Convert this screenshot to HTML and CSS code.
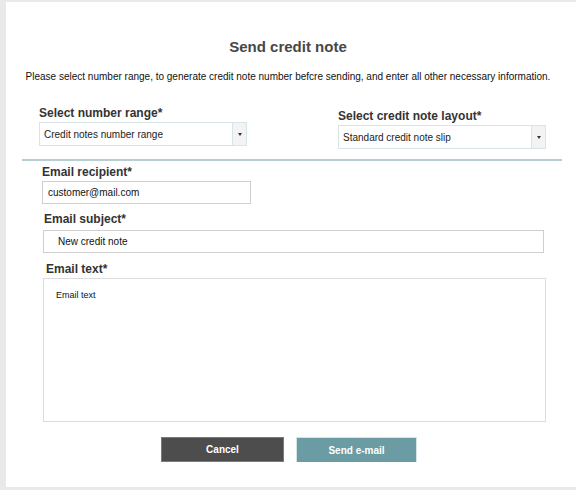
FILE: index.html
```html
<!DOCTYPE html>
<html>
<head>
<meta charset="utf-8">
<link rel="stylesheet" href="styles.css">
</head>
<body>
<div class="panel">
  <h1 class="title">Send credit note</h1>
  <p class="desc">Please select number range, to generate credit note number befcre sending, and enter all other necessary information.</p>
  <div class="selects">
    <div class="col col-left">
      <div class="label">Select number range*</div>
      <div class="select"><span class="sel-text">Credit notes number range</span><span class="arrow"><span class="tri"></span></span></div>
    </div>
    <div class="col col-right">
      <div class="label">Select credit note layout*</div>
      <div class="select"><span class="sel-text">Standard credit note slip</span><span class="arrow"><span class="tri"></span></span></div>
    </div>
  </div>
  <div class="divider"></div>
  <div class="field f-recipient">
    <div class="label">Email recipient*</div>
    <div class="input in-recipient">customer@mail.com</div>
  </div>
  <div class="field f-subject">
    <div class="label">Email subject*</div>
    <div class="input in-subject">New credit note</div>
  </div>
  <div class="field f-text">
    <div class="label">Email text*</div>
    <div class="textarea">Email text</div>
  </div>
  <div class="buttons">
    <div class="btn btn-cancel">Cancel</div>
    <div class="btn btn-send">Send e-mail</div>
  </div>
</div>
</body>
</html>
```
FILE: styles.css
```css
html, body {
  margin: 0;
  padding: 0;
  background: #e9e9e9;
  font-family: "Liberation Sans", Arial, sans-serif;
}
.panel {
  margin: 2px 0 0 6px;
  height: 485px;
  background: #fff;
  padding-top: 36px;
  box-sizing: border-box;
}
.title {
  margin: 0;
  text-align: center;
  font-size: 15px;
  line-height: 18px;
  font-weight: bold;
  color: #474747;
  padding-right: 6px;
}
.desc {
  margin: 15px 0 0 0;
  text-align: center;
  font-size: 10px;
  line-height: 12px;
  color: #111;
  padding-right: 6px;
}
.selects {
  display: flex;
  margin-top: 23px;
  padding-left: 33px;
}
.col {
  width: 208px;
  display: flex;
  flex-direction: column;
}
.col-right {
  margin-left: 91px;
  padding-top: 3px;
}
.label {
  font-size: 12px;
  line-height: 14px;
  font-weight: bold;
  color: #333;
}
.select {
  margin-top: 2px;
  height: 24px;
  border: 1px solid #d7e5e8;
  box-sizing: border-box;
  display: flex;
  align-items: center;
  font-size: 10px;
  color: #222;
}
.sel-text {
  flex: 1;
  padding-left: 4px;
}
.arrow {
  width: 13px;
  align-self: stretch;
  background: #f3f3f3;
  border-left: 1px solid #d7e5e8;
  display: flex;
  align-items: center;
  justify-content: center;
}
.tri {
  width: 0;
  height: 0;
  border-left: 2px solid transparent;
  border-right: 2px solid transparent;
  border-top: 3px solid #333;
}
.divider {
  margin: 10px 14px 0 16px;
  height: 2px;
  background: #b7ced3;
}
.field {
  display: flex;
  flex-direction: column;
}
.f-recipient {
  margin-top: 4px;
  padding-left: 36px;
}
.f-subject {
  margin-top: 8px;
  padding-left: 37px;
  margin-right: 32px;
}
.f-subject .label { padding-left: 1px; }
.f-text {
  margin-top: 9px;
  padding-left: 37px;
  margin-right: 30px;
}
.f-text .label { padding-left: 3px; }
.input {
  margin-top: 2px;
  height: 23px;
  border: 1px solid #cfcfcf;
  box-sizing: border-box;
  font-size: 10px;
  color: #111;
  display: flex;
  align-items: center;
}
.in-recipient {
  width: 209px;
  padding-left: 5px;
}
.in-subject {
  margin-top: 4px;
  padding-left: 14px;
}
.textarea {
  margin-top: 2px;
  height: 144px;
  border: 1px solid #dcdcdc;
  box-sizing: border-box;
  font-size: 9px;
  color: #111;
  padding: 11px 0 0 12px;
}
.buttons {
  display: flex;
  justify-content: flex-start;
  gap: 12px;
  margin-top: 15px;
  padding-left: 155px;
}
.btn {
  width: 123px;
  height: 25px;
  box-sizing: border-box;
  display: flex;
  align-items: center;
  justify-content: center;
  font-size: 10px;
  font-weight: bold;
  color: #fff;
}
.btn-cancel {
  background: #4d4d4d;
  border: 1px solid #7a7a7a;
}
.btn-send {
  width: 121px;
  background: #6b9ba3;
  border: 1px solid #d3e4e6;
  border-bottom: none;
}
```
